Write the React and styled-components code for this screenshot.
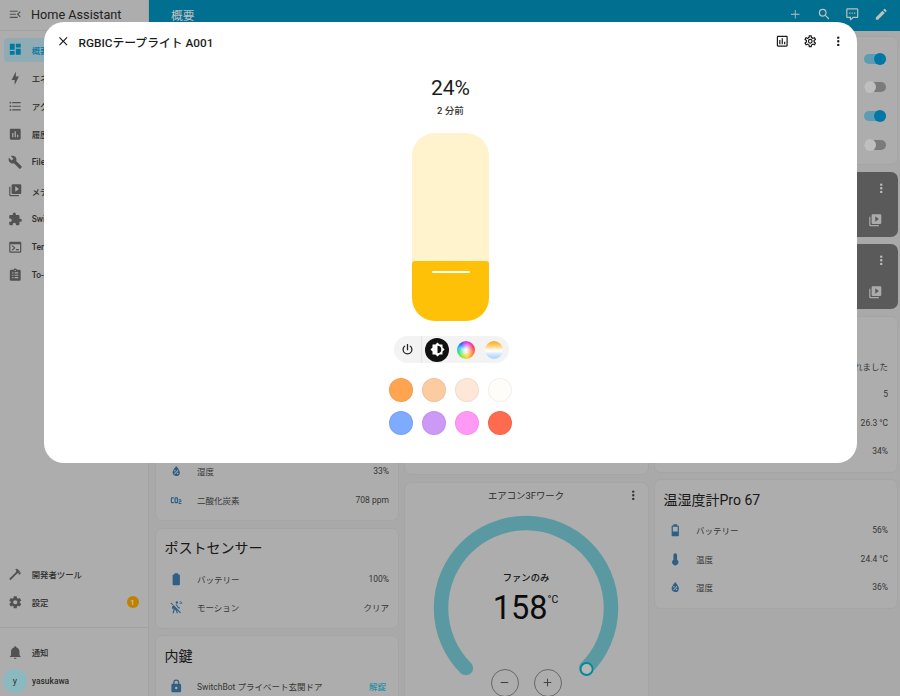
import React from 'react';
import styled, { createGlobalStyle } from 'styled-components';

const P = {
  menuOpen: 'M21,15.61L19.59,17L14.58,12L19.59,7L21,8.39L17.44,12L21,15.61M3,6H16V8H3V6M3,13V11H13V13H3M3,18V16H16V18H3Z',
  dashboard: 'M13,3V9H21V3M13,21H21V11H13M3,21H11V15H3M3,13H11V3H3V13Z',
  bolt: 'M11 15H6L13 1V9H18L11 23V15Z',
  list: 'M7,5H21V7H7V5M7,13V11H21V13H7M4,4.5A1.5,1.5 0 0,1 5.5,6A1.5,1.5 0 0,1 4,7.5A1.5,1.5 0 0,1 2.5,6A1.5,1.5 0 0,1 4,4.5M4,10.5A1.5,1.5 0 0,1 5.5,12A1.5,1.5 0 0,1 4,13.5A1.5,1.5 0 0,1 2.5,12A1.5,1.5 0 0,1 4,10.5M7,19V17H21V19H7M4,16.5A1.5,1.5 0 0,1 5.5,18A1.5,1.5 0 0,1 4,19.5A1.5,1.5 0 0,1 2.5,18A1.5,1.5 0 0,1 4,16.5Z',
  chartBox: 'M19 3H5C3.9 3 3 3.9 3 5V19C3 20.1 3.9 21 5 21H19C20.1 21 21 20.1 21 19V5C21 3.9 20.1 3 19 3M9 17H7V10H9V17M13 17H11V7H13V17M17 17H15V13H17V17Z',
  chartOutline: 'M9 17H7V10H9V17M13 17H11V7H13V17M17 17H15V13H17V17M19 19H5V5H19V19.1M19 3H5C3.9 3 3 3.9 3 5V19C3 20.1 3.9 21 5 21H19C20.1 21 21 20.1 21 19V5C21 3.9 20.1 3 19 3Z',
  wrench: 'M22.7,19L13.6,9.9C14.5,7.6 14,4.9 12.1,3C10.1,1 7.1,0.6 4.7,1.7L9,6L6,9L1.6,4.7C0.4,7.1 0.9,10.1 2.9,12.1C4.8,14 7.5,14.5 9.8,13.6L18.9,22.7C19.3,23.1 19.9,23.1 20.3,22.7L22.6,20.4C23.1,20 23.1,19.3 22.7,19Z',
  media: 'M4,6H2V20A2,2 0 0,0 4,22H18V20H4M20,2H8A2,2 0 0,0 6,4V16A2,2 0 0,0 8,18H20A2,2 0 0,0 22,16V4A2,2 0 0,0 20,2M12,14.5V5.5L18,10L12,14.5Z',
  puzzle: 'M20.5,11H19V7C19,5.89 18.1,5 17,5H13V3.5A2.5,2.5 0 0,0 10.5,1A2.5,2.5 0 0,0 8,3.5V5H4A2,2 0 0,0 2,7V10.8H3.5C5,10.8 6.2,12 6.2,13.5C6.2,15 5,16.2 3.5,16.2H2V20A2,2 0 0,0 4,22H7.8V20.5C7.8,19 9,17.8 10.5,17.8C12,17.8 13.2,19 13.2,20.5V22H17A2,2 0 0,0 19,20V16H20.5A2.5,2.5 0 0,0 23,13.5A2.5,2.5 0 0,0 20.5,11Z',
  console: 'M20,19V7H4V19H20M20,3A2,2 0 0,1 22,5V19A2,2 0 0,1 20,21H4A2,2 0 0,1 2,19V5C2,3.89 2.9,3 4,3H20M13,17V15H18V17H13M9.58,13L5.57,9H8.4L11.7,12.3C12.09,12.69 12.09,13.33 11.7,13.72L8.42,17H5.59L9.58,13Z',
  clipboard: 'M17,9H11V7H17M17,13H11V11H17M17,17H11V15H17M9,9H7V7H9M9,13H7V11H9M9,17H7V15H9M12,3A1,1 0 0,1 13,4A1,1 0 0,1 12,5A1,1 0 0,1 11,4A1,1 0 0,1 12,3M19,3H14.82C14.4,1.84 13.3,1 12,1C10.7,1 9.6,1.84 9.18,3H5A2,2 0 0,0 3,5V19A2,2 0 0,0 5,21H19A2,2 0 0,0 21,19V5A2,2 0 0,0 19,3Z',
  hammer: 'M2 19.63L13.43 8.2L12.72 7.5L14.14 6.07L12 3.89C13.2 2.7 15.09 2.7 16.27 3.89L19.87 7.5L18.45 8.91H21.29L22 9.62L18.45 13.21L17.74 12.5V9.62L16.27 11.04L15.56 10.33L4.13 21.76L2 19.63Z',
  cog: 'M12,15.5A3.5,3.5 0 0,1 8.5,12A3.5,3.5 0 0,1 12,8.5A3.5,3.5 0 0,1 15.5,12A3.5,3.5 0 0,1 12,15.5M19.43,12.97C19.47,12.65 19.5,12.33 19.5,12C19.5,11.67 19.47,11.34 19.43,11L21.54,9.37C21.73,9.22 21.78,8.95 21.66,8.73L19.66,5.27C19.54,5.05 19.27,4.96 19.05,5.05L16.56,6.05C16.04,5.66 15.5,5.32 14.87,5.07L14.5,2.42C14.46,2.18 14.25,2 14,2H10C9.75,2 9.54,2.18 9.5,2.42L9.13,5.07C8.5,5.32 7.96,5.66 7.44,6.05L4.95,5.05C4.73,4.96 4.46,5.05 4.34,5.27L2.34,8.73C2.21,8.95 2.27,9.22 2.46,9.37L4.57,11C4.53,11.34 4.5,11.67 4.5,12C4.5,12.33 4.53,12.65 4.57,12.97L2.46,14.63C2.27,14.78 2.21,15.05 2.34,15.27L4.34,18.73C4.46,18.95 4.73,19.03 4.95,18.95L7.44,17.94C7.96,18.34 8.5,18.68 9.13,18.93L9.5,21.58C9.54,21.82 9.75,22 10,22H14C14.25,22 14.46,21.82 14.5,21.58L14.87,18.93C15.5,18.67 16.04,18.34 16.56,17.94L19.05,18.95C19.27,19.03 19.54,18.95 19.66,18.73L21.66,15.27C21.78,15.05 21.73,14.78 21.54,14.63L19.43,12.97Z',
  cogOutline: 'M12,8A4,4 0 0,1 16,12A4,4 0 0,1 12,16A4,4 0 0,1 8,12A4,4 0 0,1 12,8M12,10A2,2 0 0,0 10,12A2,2 0 0,0 12,14A2,2 0 0,0 14,12A2,2 0 0,0 12,10M10,22C9.75,22 9.54,21.82 9.5,21.58L9.13,18.93C8.5,18.68 7.96,18.34 7.44,17.94L4.95,18.95C4.73,19.03 4.46,18.95 4.34,18.73L2.34,15.27C2.21,15.05 2.27,14.78 2.46,14.63L4.57,12.97L4.5,12L4.57,11L2.46,9.37C2.27,9.22 2.21,8.95 2.34,8.73L4.34,5.27C4.46,5.05 4.73,4.96 4.95,5.05L7.44,6.05C7.96,5.66 8.5,5.32 9.13,5.07L9.5,2.42C9.54,2.18 9.75,2 10,2H14C14.25,2 14.46,2.18 14.5,2.42L14.87,5.07C15.5,5.32 16.04,5.66 16.56,6.05L19.05,5.05C19.27,4.96 19.54,5.05 19.66,5.27L21.66,8.73C21.79,8.95 21.73,9.22 21.54,9.37L19.43,11L19.5,12L19.43,13L21.54,14.63C21.73,14.78 21.79,15.05 21.66,15.27L19.66,18.73C19.54,18.95 19.27,19.04 19.05,18.95L16.56,17.95C16.04,18.34 15.5,18.68 14.87,18.93L14.5,21.58C14.46,21.82 14.25,22 14,22H10M11.25,4L10.88,6.61C9.68,6.86 8.62,7.5 7.85,8.39L5.44,7.35L4.69,8.65L6.8,10.2C6.4,11.37 6.4,12.64 6.8,13.8L4.68,15.36L5.43,16.66L7.86,15.62C8.63,16.5 9.68,17.14 10.87,17.38L11.24,20H12.76L13.13,17.39C14.32,17.14 15.37,16.5 16.14,15.62L18.57,16.66L19.32,15.36L17.2,13.81C17.6,12.64 17.6,11.37 17.2,10.2L19.31,8.65L18.56,7.35L16.15,8.39C15.38,7.5 14.32,6.86 13.12,6.62L12.75,4H11.25Z',
  bell: 'M21,19V20H3V19L5,17V11C5,7.9 7.03,5.17 10,4.29C10,4.19 10,4.1 10,4A2,2 0 0,1 12,2A2,2 0 0,1 14,4C14,4.1 14,4.19 14,4.29C16.97,5.17 19,7.9 19,11V17L21,19M14,21A2,2 0 0,1 12,23A2,2 0 0,1 10,21',
  plus: 'M19,12.7H12.7V19H11.3V12.7H5V11.3H11.3V5H12.7V11.3H19V12.7Z',
  minus: 'M19,13H5V11H19V13Z',
  plusBold: 'M19,13H13V19H11V13H5V11H11V5H13V11H19V13Z',
  magnify: 'M9.5,3A6.5,6.5 0 0,1 16,9.5C16,11.11 15.41,12.59 14.44,13.73L14.71,14H15.5L20.5,19L19,20.5L14,15.5V14.71L13.73,14.44C12.59,15.41 11.11,16 9.5,16A6.5,6.5 0 0,1 3,9.5A6.5,6.5 0 0,1 9.5,3M9.5,5C7,5 5,7 5,9.5C5,12 7,14 9.5,14C12,14 14,12 14,9.5C14,7 12,5 9.5,5Z',
  comment: 'M9,22A1,1 0 0,1 8,21V18H4A2,2 0 0,1 2,16V4C2,2.89 2.9,2 4,2H20A2,2 0 0,1 22,4V16A2,2 0 0,1 20,18H13.9L10.2,21.71C10,21.9 9.75,22 9.5,22V22H9M10,16V19.08L13.08,16H20V4H4V16H10M17,11H15V9H17V11M13,11H11V9H13V11M9,11H7V9H9V11Z',
  pencil: 'M20.71,7.04C21.1,6.65 21.1,6 20.71,5.63L18.37,3.29C18,2.9 17.35,2.9 16.96,3.29L15.12,5.12L18.87,8.87M3,17.25V21H6.75L17.81,9.93L14.06,6.18L3,17.25Z',
  close: 'M19,6.41L17.59,5L12,10.59L6.41,5L5,6.41L10.59,12L5,17.59L6.41,19L12,13.41L17.59,19L19,17.59L13.41,12L19,6.41Z',
  dots: 'M12,16A2,2 0 0,1 14,18A2,2 0 0,1 12,20A2,2 0 0,1 10,18A2,2 0 0,1 12,16M12,10A2,2 0 0,1 14,12A2,2 0 0,1 12,14A2,2 0 0,1 10,12A2,2 0 0,1 12,10M12,4A2,2 0 0,1 14,6A2,2 0 0,1 12,8A2,2 0 0,1 10,6A2,2 0 0,1 12,4Z',
  power: 'M16.56,5.44L15.11,6.89C16.84,7.94 18,9.83 18,12A6,6 0 0,1 12,18A6,6 0 0,1 6,12C6,9.83 7.16,7.94 8.88,6.88L7.44,5.44C5.36,6.88 4,9.28 4,12A8,8 0 0,0 12,20A8,8 0 0,0 20,12C20,9.28 18.64,6.88 16.56,5.44M13,3H11V13H13',
  brightness: 'M12,18V6A6,6 0 0,1 18,12A6,6 0 0,1 12,18M20,15.31L23.31,12L20,8.69V4H15.31L12,0.69L8.69,4H4V8.69L0.69,12L4,15.31V20H8.69L12,23.31L15.31,20H20V15.31Z',
  water: 'M12,3.25C12,3.25 6,10 6,14C6,17.32 8.69,20 12,20A6,6 0 0,0 18,14C18,10 12,3.25 12,3.25M14.47,9.97L15.53,11.03L9.53,17.03L8.47,15.97M9.75,10A1.25,1.25 0 0,1 11,11.25A1.25,1.25 0 0,1 9.75,12.5A1.25,1.25 0 0,1 8.5,11.25A1.25,1.25 0 0,1 9.75,10M14.25,14.5A1.25,1.25 0 0,1 15.5,15.75A1.25,1.25 0 0,1 14.25,17A1.25,1.25 0 0,1 13,15.75A1.25,1.25 0 0,1 14.25,14.5Z',
  co2: 'M5,7A2,2 0 0,0 3,9V15A2,2 0 0,0 5,17H8V15H5V9H8V7H5M11,7A2,2 0 0,0 9,9V15A2,2 0 0,0 11,17H13A2,2 0 0,0 15,15V9A2,2 0 0,0 13,7H11M11,9H13V15H11V9M16,10.5V12H19V13.5H17.5A1.5,1.5 0 0,0 16,15V18H20.5V16.5H17.5V15H19A1.5,1.5 0 0,0 20.5,13.5V12C20.5,11.17 19.83,10.5 19,10.5H16Z',
  battery: 'M16.67,4H15V2H9V4H7.33A1.33,1.33 0 0,0 6,5.33V20.67C6,21.4 6.6,22 7.33,22H16.67A1.33,1.33 0 0,0 18,20.67V5.33C18,4.6 17.4,4 16.67,4Z',
  battery50: 'M16 14H8V6H16M16.67 4H15V2H9V4H7.33C6.6 4 6 4.6 6 5.33V20.67C6 21.4 6.6 22 7.33 22H16.67C17.41 22 18 21.41 18 20.67V5.33C18 4.6 17.4 4 16.67 4Z',
  motion: 'M2.3 5.3L3.6 4L19.8 20.7L18.5 22L13 16.4L15 22H13L11.2 17.2L9.4 15.4L8 22H6L7.6 13.6L5 14.8V10.6L7.5 9.4L2.3 5.3M13 2.2A2 2 0 1 1 13 6.2A2 2 0 1 1 13 2.2M10.8 7.6L13.2 7.4L14.6 10.2C15.4 11.5 16.6 12.2 18 12.2V14.2C17 14.2 15.9 13.9 15 13.3L10.8 7.6M17.5 2.5H19.2C20.6 2.5 21.8 3.7 21.8 5.1V6.8H20.6V5.1C20.6 4.3 20 3.7 19.2 3.7H17.5V2.5M17.5 5H19.2V6.8H18V6.2H17.5V5Z',
  thermometer: 'M15 13V5A3 3 0 0 0 9 5V13A5 5 0 1 0 15 13Z',
  lock: 'M12,17A2,2 0 0,0 14,15C14,13.89 13.1,13 12,13A2,2 0 0,0 10,15A2,2 0 0,0 12,17M18,8A2,2 0 0,1 20,10V20A2,2 0 0,1 18,22H6A2,2 0 0,1 4,20V10C4,8.89 4.9,8 6,8H7V6A5,5 0 0,1 12,1A5,5 0 0,1 17,6V8H18M12,3A3,3 0 0,0 9,6V8H15V6A3,3 0 0,0 12,3Z',
};

const FONT = `Roboto, "Noto Sans CJK JP", sans-serif`;

const Global = createGlobalStyle`
  html, body { margin: 0; padding: 0; height: 696px; overflow: hidden; }
  body { font-family: ${FONT}; }
  * { box-sizing: border-box; }
`;

const Glyph = styled.svg`
  width: ${p => p.$size || 14.5}px;
  height: ${p => p.$size || 14.5}px;
  flex: none;
  display: block;
  fill: ${p => p.$color || '#6e6e6e'};
`;
const Icon = ({ d, size, color }) => (
  <Glyph viewBox="0 0 24 24" $size={size} $color={color}><path d={d} /></Glyph>
);

const Page = styled.div`
  width: 900px;
  height: 696px;
  display: flex;
  overflow: hidden;
  background: #e2e2e2;
`;

const Sidebar = styled.aside`
  width: 149px;
  flex: none;
  height: 696px;
  display: flex;
  flex-direction: column;
  background: #e7e7e7;
  border-right: 1px solid #dadada;
`;
const SideHead = styled.div`
  height: 31px;
  flex: none;
  display: flex;
  align-items: center;
  gap: 8.5px;
  padding: 0 0 2px 8px;
  border-bottom: 1px solid #d8d8d8;
`;
const Brand = styled.span`
  font-size: 12.7px;
  color: #2e2e2e;
`;
const NavList = styled.nav`
  display: flex;
  flex-direction: column;
  gap: 4.2px;
  padding: 0 4px;
  margin-top: ${p => p.$top || 0}px;
`;
const NavItem = styled.div`
  height: 24px;
  display: flex;
  align-items: center;
  gap: 9.5px;
  padding: 0 5.5px 0 3.75px;
  border-radius: 4px;
  font-size: 8.4px;
  font-weight: 500;
  white-space: nowrap;
  color: ${p => (p.$active ? '#00a0d4' : '#3c3c3c')};
  background: ${p => (p.$active ? '#bfe6f2' : 'transparent')};
`;
const Badge = styled.span`
  margin-left: auto;
  width: 12px;
  height: 12px;
  border-radius: 50%;
  background: #ffad00;
  color: #fff;
  font-size: 8px;
  display: flex;
  align-items: center;
  justify-content: center;
`;
const SideDivider = styled.div`
  height: 1px;
  flex: none;
  background: #d8d8d8;
  margin: 13px 0 12px;
`;
const SideBottom = styled.div`
  margin-top: auto;
  padding-bottom: 3.5px;
`;
const Avatar = styled.span`
  width: 24px;
  height: 24px;
  margin-left: -4.75px;
  margin-right: -4.5px;
  border-radius: 50%;
  flex: none;
  display: flex;
  align-items: center;
  justify-content: center;
  background: #b8f8ff;
  color: #444;
  font-weight: 400;
  font-size: 9px;
`;

const Main = styled.main`
  flex: 1;
  min-width: 0;
  display: flex;
  flex-direction: column;
`;
const TopBar = styled.header`
  height: 31px;
  flex: none;
  display: flex;
  align-items: center;
  justify-content: space-between;
  padding: 0 11.75px 3px 22px;
  background: #0094c1;
  color: #fff;
`;
const TopTitle = styled.h1`
  margin: 0;
  font-size: 11.7px;
  font-weight: 400;
`;
const TopActions = styled.div`
  display: flex;
  gap: 14px;
`;
const Columns = styled.div`
  display: grid;
  grid-template-columns: 244px 245px 244px;
  gap: 5px;
  padding: 5px 0 0 5.5px;
`;
const Column = styled.div`
  display: flex;
  flex-direction: column;
  gap: 6.5px;
`;
const Card = styled.section`
  flex: none;
  height: ${p => (p.$height ? `${p.$height}px` : 'auto')};
  display: flex;
  flex-direction: column;
  justify-content: ${p => (p.$height ? 'flex-end' : 'flex-start')};
  padding-bottom: ${p => (p.$bottom === undefined ? 6 : p.$bottom)}px;
  background: #e7e7e7;
  border: 1px solid #dcdcdc;
  border-radius: 7px;
`;
const CardTitle = styled.h2`
  margin: 0;
  height: 36px;
  flex: none;
  display: flex;
  align-items: center;
  padding: 1px 9px 0;
  font-size: 14px;
  font-weight: 400;
  color: #222;
`;
const Row = styled.div`
  height: 28.5px;
  flex: none;
  display: flex;
  align-items: center;
  padding: 0 8.5px 0 13px;
  font-size: 8.5px;
  color: #4a4a4a;
`;
const RowLabel = styled.span`
  margin-left: 14px;
  flex: 1;
  white-space: nowrap;
`;
const RowValue = styled.span`
  white-space: nowrap;
  color: ${p => (p.$action ? '#38bfe0' : '#4a4a4a')};
  font-weight: ${p => (p.$action ? 500 : 400)};
  margin-right: ${p => (p.$action ? 3 : 0)}px;
`;
const ToggleRow = styled.div`
  height: 28.8px;
  flex: none;
  display: flex;
  align-items: center;
  justify-content: flex-end;
  padding-right: 11px;
`;
const Track = styled.span`
  width: 22px;
  height: 10px;
  border-radius: 5px;
  display: flex;
  align-items: center;
  justify-content: ${p => (p.$on ? 'flex-end' : 'flex-start')};
  background: ${p => (p.$on ? '#7bd2f0' : '#a4a4a4')};
`;
const Thumb = styled.span`
  width: 12px;
  height: 12px;
  flex: none;
  border-radius: 50%;
  background: ${p => (p.$on ? '#00a0dc' : '#fff')};
`;
const MediaCard = styled.section`
  height: 65.5px;
  flex: none;
  display: flex;
  flex-direction: column;
  align-items: flex-end;
  padding: 9px 9px 0 0;
  border-radius: 7px;
  background: #797979;
`;
const MediaIcon = styled.div`
  margin: 18px 6.5px 0 0;
`;
const ClimateHead = styled.div`
  height: 25px;
  flex: none;
  display: flex;
  align-items: center;
  justify-content: center;
  position: relative;
  font-size: 9.4px;
  color: #3a3a3a;
`;
const ClimateMenu = styled.span`
  position: absolute;
  right: 7.5px;
  top: 5px;
`;
const GaugeWrap = styled.div`
  position: relative;
  width: 198px;
  height: 198px;
  margin-top: 1.5px;
  align-self: center;
`;
const GaugeText = styled.div`
  position: absolute;
  inset: 61.5px 0 auto;
  display: flex;
  flex-direction: column;
  align-items: center;
  color: #111;
`;
const GaugeMode = styled.span`
  font-size: 9.3px;
  font-weight: 500;
  line-height: 14px;
  color: #222;
`;
const GaugeValue = styled.div`
  display: flex;
  align-items: flex-start;
  font-size: 32.5px;
  line-height: 38px;
  margin-top: 4px;
  margin-left: -1px;
`;
const GaugeUnit = styled.sup`
  font-size: 10.5px;
  line-height: 12px;
  margin-top: 5px;
  vertical-align: baseline;
`;
const GaugeButtons = styled.div`
  position: absolute;
  top: 159.5px;
  left: 0;
  right: 0;
  display: flex;
  justify-content: center;
  gap: 15px;
`;
const RoundButton = styled.span`
  width: 28px;
  height: 28px;
  border-radius: 50%;
  border: 1px solid #8a8a8a;
  display: flex;
  align-items: center;
  justify-content: center;
`;

const Scrim = styled.div`
  position: fixed;
  inset: 0;
  display: flex;
  justify-content: center;
  align-items: flex-start;
  padding: 22px 0 0 1px;
  background: rgba(0, 0, 0, 0.25);
`;
const Dialog = styled.div`
  width: 813px;
  height: 441px;
  display: flex;
  flex-direction: column;
  align-items: center;
  background: #fff;
  border-radius: 20px;
`;
const DialogBar = styled.div`
  width: 100%;
  height: 39px;
  flex: none;
  display: flex;
  align-items: center;
  padding: 0 11.25px 0 11.5px;
  gap: 8.5px;
`;
const DialogTitle = styled.h2`
  margin: 0;
  flex: 1;
  font-size: 11.8px;
  font-weight: 500;
  color: #1c1c1c;
`;
const DialogActions = styled.div`
  display: flex;
  gap: 13.5px;
`;
const Value = styled.div`
  margin-top: 14.5px;
  font-size: 21px;
  line-height: 25px;
  color: #1c1c1c;
`;
const Ago = styled.div`
  margin-top: 4.5px;
  font-size: 9.5px;
  font-weight: 500;
  line-height: 12px;
  color: #333;
`;
const SliderTrack = styled.div`
  margin-top: 16px;
  width: 77px;
  height: 188px;
  flex: none;
  display: flex;
  flex-direction: column;
  justify-content: flex-end;
  overflow: hidden;
  border-radius: 23px;
  background: #fff3cd;
`;
const SliderFill = styled.div`
  display: flex;
  justify-content: center;
  border-radius: 3px 3px 0 0;
  background: #ffc107;
`;
const SliderHandle = styled.span`
  width: 38px;
  height: 2px;
  margin-top: 9.5px;
  border-radius: 1px;
  background: #fff;
`;
const ModeBar = styled.div`
  margin: 15px 0 0 1px;
  width: 115px;
  height: 27px;
  flex: none;
  display: flex;
  align-items: center;
  border-radius: 14px;
  background: #f3f3f3;
`;
const PowerSlot = styled.div`
  width: 28.5px;
  height: 27px;
  margin-right: 1px;
  flex: none;
  display: flex;
  align-items: center;
  justify-content: center;
  border-right: 1px solid #e4e4e4;
`;
const ModeSlot = styled.div`
  width: 28.5px;
  display: flex;
  align-items: center;
  justify-content: center;
`;
const ActiveMode = styled.span`
  width: 24px;
  height: 24px;
  border-radius: 50%;
  background: #111;
  display: flex;
  align-items: center;
  justify-content: center;
`;
const ColorWheel = styled.span`
  width: 18px;
  height: 18px;
  border-radius: 50%;
  background:
    radial-gradient(circle, #fff 0%, rgba(255, 255, 255, 0.8) 18%, rgba(255, 255, 255, 0) 62%),
    conic-gradient(#d63cff 0deg, #ff3b5c 70deg, #ff7a2e 115deg, #ffd22e 170deg, #8fe83a 215deg, #2fe07a 250deg, #28c8f0 285deg, #2f5dff 320deg, #d63cff 360deg);
`;
const TempWheel = styled.span`
  width: 18px;
  height: 18px;
  border-radius: 50%;
  background: linear-gradient(#ffa726 0%, #ffc65c 22%, #fff4d8 46%, #ffffff 56%, #cfe6ff 74%, #a8d2fb 100%);
`;
const Presets = styled.div`
  margin-top: 15px;
  display: grid;
  grid-template-columns: repeat(4, 24px);
  gap: 9px;
`;
const Preset = styled.span`
  width: 24px;
  height: 24px;
  border-radius: 50%;
  background: ${p => p.$color};
  border: 1px solid rgba(0, 0, 0, 0.05);
`;

const NAV = [
  [P.dashboard, '概要', true],
  [P.bolt, 'エネルギー'],
  [P.list, 'アクティビティ'],
  [P.chartBox, '履歴'],
  [P.wrench, 'File editor'],
  [P.media, 'メディア'],
  [P.puzzle, 'Switch'],
  [P.console, 'Terminal'],
  [P.clipboard, 'To-do'],
];
const PRESETS = ['#ffa552', '#fdcba0', '#fde8d8', '#fffdf8', '#7eaaff', '#cc99f7', '#ff99f5', '#ff6b4f'];
const ROW_ICON = '#3f7fb1';

const SensorRow = ({ icon, label, value, action }) => (
  <Row>
    <Icon d={icon} color={ROW_ICON} />
    <RowLabel>{label}</RowLabel>
    <RowValue $action={action}>{value}</RowValue>
  </Row>
);

const Toggle = ({ on }) => (
  <ToggleRow><Track $on={on}><Thumb $on={on} /></Track></ToggleRow>
);

const Media = () => (
  <MediaCard>
    <Icon d={P.dots} color="#fff" />
    <MediaIcon><Icon d={P.media} color="#e4e4e4" /></MediaIcon>
  </MediaCard>
);

export default function App() {
  return (
    <>
      <Global />
      <Page>
        <Sidebar>
          <SideHead>
            <Icon d={P.menuOpen} />
            <Brand>Home Assistant</Brand>
          </SideHead>
          <NavList $top={6.7}>
            {NAV.map(([d, label, active]) => (
              <NavItem key={label} $active={active}>
                <Icon d={d} color={active ? '#00a0d4' : undefined} />
                {label}
              </NavItem>
            ))}
          </NavList>
          <SideBottom>
            <NavList>
              <NavItem><Icon d={P.hammer} />開発者ツール</NavItem>
              <NavItem><Icon d={P.cog} />設定<Badge>1</Badge></NavItem>
            </NavList>
            <SideDivider />
            <NavList>
              <NavItem><Icon d={P.bell} />通知</NavItem>
              <NavItem><Avatar>y</Avatar>yasukawa</NavItem>
            </NavList>
          </SideBottom>
        </Sidebar>
        <Main>
          <TopBar>
            <TopTitle>概要</TopTitle>
            <TopActions>
              <Icon d={P.plus} color="#fff" />
              <Icon d={P.magnify} color="#fff" />
              <Icon d={P.comment} color="#fff" />
              <Icon d={P.pencil} color="#fff" />
            </TopActions>
          </TopBar>
          <Columns>
            <Column>
              <Card $height={485}>
                <SensorRow icon={P.water} label="湿度" value="33%" />
                <SensorRow icon={P.co2} label="二酸化炭素" value="708 ppm" />
              </Card>
              <Card>
                <CardTitle>ポストセンサー</CardTitle>
                <SensorRow icon={P.battery} label="バッテリー" value="100%" />
                <SensorRow icon={P.motion} label="モーション" value="クリア" />
              </Card>
              <Card>
                <CardTitle>内鍵</CardTitle>
                <SensorRow icon={P.lock} label="SwitchBot プライベート玄関ドア" value="解錠" action />
              </Card>
            </Column>
            <Column>
              <Card $height={439} />
              <Card $bottom={0}>
                <ClimateHead>
                  エアコン3Fワーク
                  <ClimateMenu><Icon d={P.dots} color="#4a4a4a" /></ClimateMenu>
                </ClimateHead>
                <GaugeWrap>
                  <svg width="198" height="198" viewBox="0 0 198 198">
                    <path d="M38.9 159.1 A85 85 0 1 1 159.1 159.1" fill="none" stroke="#78cdd8" strokeWidth="14.5" strokeLinecap="round" />
                    <circle cx="159.6" cy="160" r="6" fill="#f4f4f4" stroke="#00b9cf" strokeWidth="1.8" />
                  </svg>
                  <GaugeText>
                    <GaugeMode>ファンのみ</GaugeMode>
                    <GaugeValue>158<GaugeUnit>°C</GaugeUnit></GaugeValue>
                  </GaugeText>
                  <GaugeButtons>
                    <RoundButton><Icon d={P.minus} color="#5a5a5a" size={13} /></RoundButton>
                    <RoundButton><Icon d={P.plusBold} color="#5a5a5a" size={13} /></RoundButton>
                  </GaugeButtons>
                </GaugeWrap>
              </Card>
            </Column>
            <Column>
              <Card $height={129} $bottom={4.6}>
                <Toggle on />
                <Toggle />
                <Toggle on />
                <Toggle />
              </Card>
              <Media />
              <Media />
              <Card $height={157}>
                <Row><RowLabel /><RowValue>れました</RowValue></Row>
                <Row><RowLabel /><RowValue>5</RowValue></Row>
                <Row><RowLabel /><RowValue>26.3 °C</RowValue></Row>
                <Row><RowLabel /><RowValue>34%</RowValue></Row>
              </Card>
              <Card>
                <CardTitle>温湿度計Pro 67</CardTitle>
                <SensorRow icon={P.battery50} label="バッテリー" value="56%" />
                <SensorRow icon={P.thermometer} label="温度" value="24.4 °C" />
                <SensorRow icon={P.water} label="湿度" value="36%" />
              </Card>
            </Column>
          </Columns>
        </Main>
      </Page>
      <Scrim>
        <Dialog>
          <DialogBar>
            <Icon d={P.close} color="#1c1c1c" />
            <DialogTitle>RGBICテープライト A001</DialogTitle>
            <DialogActions>
              <Icon d={P.chartOutline} color="#1c1c1c" />
              <Icon d={P.cogOutline} color="#1c1c1c" />
              <Icon d={P.dots} color="#1c1c1c" />
            </DialogActions>
          </DialogBar>
          <Value>24%</Value>
          <Ago>2 分前</Ago>
          <SliderTrack>
            <SliderFill style={{ height: `${Math.round(188 * 0.32)}px` }}>
              <SliderHandle />
            </SliderFill>
          </SliderTrack>
          <ModeBar>
            <PowerSlot><Icon d={P.power} color="#222" size={15} /></PowerSlot>
            <ModeSlot><ActiveMode><Icon d={P.brightness} color="#fff" size={15} /></ActiveMode></ModeSlot>
            <ModeSlot><ColorWheel /></ModeSlot>
            <ModeSlot><TempWheel /></ModeSlot>
          </ModeBar>
          <Presets>
            {PRESETS.map(c => <Preset key={c} $color={c} />)}
          </Presets>
        </Dialog>
      </Scrim>
    </>
  );
}
